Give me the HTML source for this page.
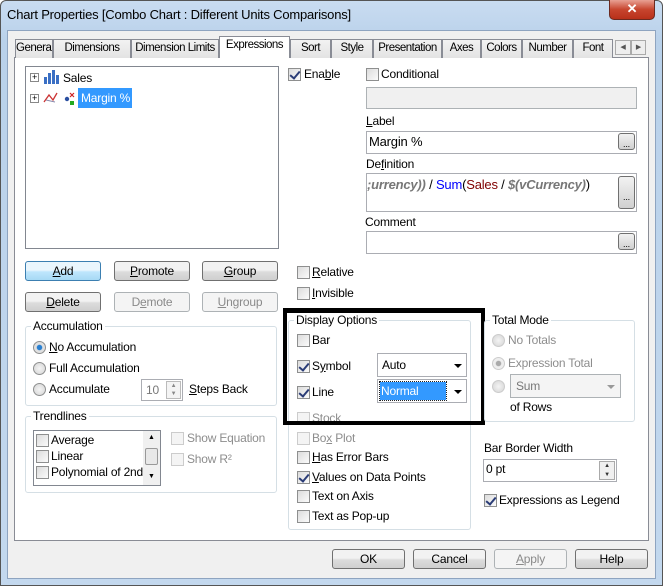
<!DOCTYPE html>
<html><head><style>
*{box-sizing:border-box}
body{margin:0;width:663px;height:586px;overflow:hidden;font-family:"Liberation Sans",sans-serif;font-size:12px;letter-spacing:-0.2px;color:#000;background:#fff}
.a{position:absolute;white-space:nowrap}
.frame{left:0;top:0;width:663px;height:586px;background:linear-gradient(#c9dcf1,#b9d1ea 40px,#c3d8ee);border:1px solid #555;border-radius:6px 6px 0 0}
.client{left:7px;top:30px;width:649px;height:549px;background:#f0f0f0;border:1px solid #8ea4c0}
.panel{left:14px;top:57px;width:635px;height:484px;background:#fff;border:1px solid #898c95}
.tab{top:39px;height:19px;border:1px solid #898c95;border-bottom:none;background:linear-gradient(#f2f2f2,#e3e3e3);padding:2px 0 0;text-align:center;font-size:11.5px;letter-spacing:-0.5px;overflow:hidden}
.tab.sel{top:36px;height:22px;background:#fff;z-index:2}
.btn{height:20px;border:1px solid #707070;border-radius:3px;background:linear-gradient(#f2f2f2 45%,#dcdcdc 55%,#cfcfcf);text-align:center;line-height:18px}
.btn.dis{border-color:#adb2b5;color:#8a8a8a;background:#f4f4f4}
.cb{width:13px;height:13px;border:1px solid #8e8f8f;background:linear-gradient(135deg,#dcdcdc,#fbfbfb)}
.cb.on::after{content:"";position:absolute;left:3px;top:0px;width:4px;height:8px;border:solid #2b3d77;border-width:0 2px 2px 0;transform:rotate(40deg)}
.rb{width:13px;height:13px;border:1px solid #8e8f8f;border-radius:50%;background:radial-gradient(#f4f4f4,#d4d4d4)}
.grp{border:1px solid #d5dfe5;border-radius:3px}
.gl{background:#fff;padding:0 2px}
.inp{border:1px solid #abadb3;background:#fff}
.dots{width:17px;height:17px;border:1px solid #707070;border-radius:3px;background:linear-gradient(#f2f2f2,#d0d0d0);font-size:9px;text-align:center;line-height:20px}
.dd{border:1px solid #abadb3;background:#fff}
.arr{width:0;height:0;border-left:4px solid transparent;border-right:4px solid transparent;border-top:4px solid #000}
.gray{color:#8d8d8d}
u{text-decoration:underline}
</style></head><body>
<div class="a frame"></div>
<div class="a" style="left:7px;top:7px;font-size:13px;color:#000">Chart Properties [Combo Chart : Different Units Comparisons]</div>
<div class="a" style="left:609px;top:0;width:46px;height:20px;background:linear-gradient(#e8a093,#c7452e 50%,#b8301a);border:1px solid #6b2a20;border-top:none;border-radius:0 0 5px 5px;color:#fff;text-align:center;font-weight:bold;font-size:13px;line-height:18px">✕</div>
<div class="a client"></div>
<div class="a panel"></div>
<div class="a tab" style="left:15px;width:38px">General</div>
<div class="a tab" style="left:53px;width:78px">Dimensions</div>
<div class="a tab" style="left:131px;width:88px">Dimension Limits</div>
<div class="a tab sel" style="left:219px;width:71px">Expressions</div>
<div class="a tab" style="left:290px;width:41px">Sort</div>
<div class="a tab" style="left:331px;width:42px">Style</div>
<div class="a tab" style="left:373px;width:69px">Presentation</div>
<div class="a tab" style="left:442px;width:39px">Axes</div>
<div class="a tab" style="left:481px;width:41px">Colors</div>
<div class="a tab" style="left:522px;width:51px">Number</div>
<div class="a tab" style="left:573px;width:40px">Font</div>
<div class="a" style="left:615px;top:40px;width:16px;height:15px;border:1px solid #aaa;background:#eee;font-size:7px;text-align:center;line-height:13px;color:#555">◀</div>
<div class="a" style="left:631px;top:40px;width:15px;height:15px;border:1px solid #aaa;background:#eee;font-size:7px;text-align:center;line-height:13px;color:#555">▶</div>

<div class="a" style="left:25px;top:66px;width:254px;height:183px;border:1px solid #828790;background:#fff"></div>
<div class="a" style="left:30px;top:73px;width:9px;height:9px;border:1px solid #888;font-size:9px;line-height:7px;text-align:center">+</div>
<svg class="a" style="left:43px;top:70px" width="16" height="14"><rect x="1" y="7" width="3" height="7" fill="#3a6fc4"/><rect x="5" y="3" width="3" height="11" fill="#3a6fc4"/><rect x="9" y="0" width="3" height="14" fill="#3a6fc4"/><rect x="13" y="5" width="3" height="9" fill="#3a6fc4"/></svg>
<div class="a" style="left:63px;top:71px">Sales</div>
<div class="a" style="left:30px;top:94px;width:9px;height:9px;border:1px solid #888;font-size:9px;line-height:7px;text-align:center">+</div>
<svg class="a" style="left:43px;top:90px" width="36" height="16"><path d="M1 12 L6 5 L10 10 L14 3" stroke="#c33" fill="none" stroke-width="1.3"/><path d="M3 10 L12 12" stroke="#88a" fill="none"/><circle cx="24" cy="9" r="2.2" fill="#2a4fa0"/><rect x="27" y="11" width="4" height="4" fill="#2a2"/><path d="M27 3l4 4M31 3l-4 4" stroke="#c22" stroke-width="1.2"/></svg>
<div class="a" style="left:78px;top:88px;width:54px;height:20px;background:#3399ff;color:#fff;padding:3px 0 0 3px">Margin %</div>

<div class="a btn" style="left:25px;top:261px;width:76px;border-color:#3c7fb1;background:linear-gradient(#eaf6fd 45%,#bee6fd 55%,#a7d9f5)"><u>A</u>dd</div>
<div class="a btn" style="left:114px;top:261px;width:76px"><u>P</u>romote</div>
<div class="a btn" style="left:202px;top:261px;width:76px"><u>G</u>roup</div>
<div class="a btn" style="left:25px;top:292px;width:76px"><u>D</u>elete</div>
<div class="a btn dis" style="left:114px;top:292px;width:76px">D<u>e</u>mote</div>
<div class="a btn dis" style="left:202px;top:292px;width:76px"><u>U</u>ngroup</div>

<div class="a grp" style="left:25px;top:326px;width:252px;height:80px"></div>
<div class="a gl" style="left:31px;top:319px">Accumulation</div>
<div class="a rb" style="left:33px;top:341px;background:radial-gradient(#2a7fd0 30%,#e0e0e0 40%)"></div>
<div class="a" style="left:49px;top:340px"><u>N</u>o Accumulation</div>
<div class="a rb" style="left:33px;top:362px"></div>
<div class="a" style="left:49px;top:361px">Full Accumulation</div>
<div class="a rb" style="left:33px;top:383px"></div>
<div class="a" style="left:49px;top:382px">Accumulate</div>
<div class="a inp" style="left:141px;top:379px;width:42px;height:22px;color:#777;padding:3px 0 0 4px">10</div>
<div class="a" style="left:166px;top:381px;width:15px;height:18px;border:1px solid #bbb;background:#f4f4f4;font-size:6px;line-height:8px;text-align:center;color:#888">▲<br>▼</div>
<div class="a" style="left:189px;top:382px"><u>S</u>teps Back</div>

<div class="a grp" style="left:25px;top:416px;width:252px;height:77px"></div>
<div class="a gl" style="left:31px;top:409px">Trendlines</div>
<div class="a" style="left:33px;top:430px;width:128px;height:56px;border:1px solid #828790;overflow:hidden;background:#fff"></div>
<div class="a cb" style="left:36px;top:434px"></div><div class="a" style="left:51px;top:433px">Average</div>
<div class="a cb" style="left:36px;top:450px"></div><div class="a" style="left:51px;top:449px">Linear</div>
<div class="a cb" style="left:36px;top:466px"></div><div class="a" style="left:51px;top:465px;width:92px;overflow:hidden;white-space:nowrap">Polynomial of 2nd degree</div>
<div class="a" style="left:143px;top:431px;width:17px;height:54px;background:#f0f0f0"></div>
<div class="a" style="left:145px;top:448px;width:13px;height:17px;border:1px solid #999;border-radius:2px;background:#e8e8e8"></div>
<div class="a" style="left:148px;top:434px;font-size:7px">▲</div><div class="a" style="left:148px;top:473px;font-size:7px">▼</div>
<div class="a cb" style="left:171px;top:432px;border-color:#ccc;background:#f4f4f4"></div><div class="a gray" style="left:187px;top:431px">Show Equation</div>
<div class="a cb" style="left:171px;top:453px;border-color:#ccc;background:#f4f4f4"></div><div class="a gray" style="left:187px;top:452px">Show R²</div>

<div class="a cb on" style="left:288px;top:68px"></div><div class="a" style="left:304px;top:67px">Ena<u>b</u>le</div>
<div class="a cb" style="left:366px;top:68px"></div><div class="a" style="left:381px;top:67px">Conditional</div>
<div class="a" style="left:366px;top:87px;width:271px;height:22px;border:1px solid #adb2b5;background:#f0f0f0"></div>
<div class="a" style="left:366px;top:114px"><u>L</u>abel</div>
<div class="a inp" style="left:366px;top:131px;width:271px;height:23px;padding:2px 0 0 2px;font-size:13px">Margin %</div>
<div class="a dots" style="left:618px;top:133px">...</div>
<div class="a" style="left:366px;top:157px">De<u>f</u>inition</div>
<div class="a inp" style="left:366px;top:173px;width:271px;height:39px;padding:3px 0 0 0;font-size:13px;white-space:nowrap;overflow:hidden"><i style="color:#777;font-weight:bold">;urrency))</i> / <span style="color:#00f">Sum</span>(<span style="color:#800000">Sales</span> / <i style="color:#777;font-weight:bold">$(vCurrency)</i>)</div>
<div class="a dots" style="left:618px;top:176px;height:33px;line-height:40px">...</div>
<div class="a" style="left:365px;top:215px">Comment</div>
<div class="a inp" style="left:366px;top:231px;width:271px;height:23px"></div>
<div class="a dots" style="left:618px;top:233px">...</div>
<div class="a cb" style="left:297px;top:266px"></div><div class="a" style="left:312px;top:265px"><u>R</u>elative</div>
<div class="a cb" style="left:297px;top:287px"></div><div class="a" style="left:312px;top:286px"><u>I</u>nvisible</div>

<div class="a grp" style="left:288px;top:320px;width:183px;height:210px"></div>
<div class="a gl" style="left:294px;top:313px">Display Options</div>
<div class="a cb" style="left:297px;top:334px"></div><div class="a" style="left:312px;top:333px">Bar</div>
<div class="a cb on" style="left:297px;top:360px"></div><div class="a" style="left:312px;top:359px">S<u>y</u>mbol</div>
<div class="a dd" style="left:377px;top:353px;width:90px;height:24px;padding:4px 0 0 4px">Auto</div>
<div class="a arr" style="left:454px;top:364px"></div>
<div class="a cb on" style="left:297px;top:386px"></div><div class="a" style="left:312px;top:385px">Line</div>
<div class="a dd" style="left:377px;top:379px;width:90px;height:24px"></div>
<div class="a" style="left:380px;top:382px;width:66px;height:18px;background:#3399ff;color:#fff;padding:2px 0 0 1px;outline:1px dotted #222">Normal</div>
<div class="a arr" style="left:454px;top:390px"></div>
<div class="a cb" style="left:297px;top:412px;border-color:#ccc;background:#f4f4f4"></div><div class="a gray" style="left:312px;top:411px">Stock</div>
<div class="a cb" style="left:297px;top:432px;border-color:#ccc;background:#f4f4f4"></div><div class="a gray" style="left:312px;top:431px">Bo<u>x</u> Plot</div>
<div class="a cb" style="left:297px;top:451px"></div><div class="a" style="left:312px;top:450px"><u>H</u>as Error Bars</div>
<div class="a cb on" style="left:297px;top:471px"></div><div class="a" style="left:312px;top:470px"><u>V</u>alues on Data Points</div>
<div class="a cb" style="left:297px;top:490px"></div><div class="a" style="left:312px;top:489px">Text on Axis</div>
<div class="a cb" style="left:297px;top:510px"></div><div class="a" style="left:312px;top:509px">Text as Pop-up</div>

<div class="a" style="left:283px;top:308px;width:202px;height:117px;border:4px solid #000;border-top-width:5px"></div>

<div class="a grp" style="left:484px;top:320px;width:151px;height:102px"></div>
<div class="a gl" style="left:490px;top:313px">Total Mode</div>
<div class="a rb" style="left:492px;top:334px;border-color:#ccc"></div><div class="a gray" style="left:508px;top:333px">No Totals</div>
<div class="a rb" style="left:492px;top:357px;border-color:#ccc;background:radial-gradient(#aaa 30%,#eee 40%)"></div><div class="a gray" style="left:508px;top:356px">Expression Total</div>
<div class="a rb" style="left:492px;top:380px;border-color:#ccc"></div>
<div class="a" style="left:510px;top:374px;width:111px;height:24px;border:1px solid #adb2b5;background:#f4f4f4;color:#777;padding:4px 0 0 5px">Sum</div>
<div class="a arr" style="left:607px;top:385px;border-top-color:#999"></div>
<div class="a" style="left:510px;top:400px">of Rows</div>
<div class="a" style="left:484px;top:441px">Bar Border Width</div>
<div class="a inp" style="left:483px;top:459px;width:134px;height:23px;padding:2px 0 0 2px">0 pt</div>
<div class="a" style="left:599px;top:461px;width:16px;height:19px;border:1px solid #aaa;background:#f0f0f0;font-size:6px;line-height:9px;text-align:center;color:#333">▲<br>▼</div>
<div class="a cb on" style="left:484px;top:494px"></div><div class="a" style="left:499px;top:493px">Expressions as Legend</div>

<div class="a btn" style="left:332px;top:549px;width:73px">OK</div>
<div class="a btn" style="left:413px;top:549px;width:73px">Cancel</div>
<div class="a btn dis" style="left:494px;top:549px;width:73px"><u>A</u>pply</div>
<div class="a btn" style="left:575px;top:549px;width:73px">Help</div>
</body></html>
